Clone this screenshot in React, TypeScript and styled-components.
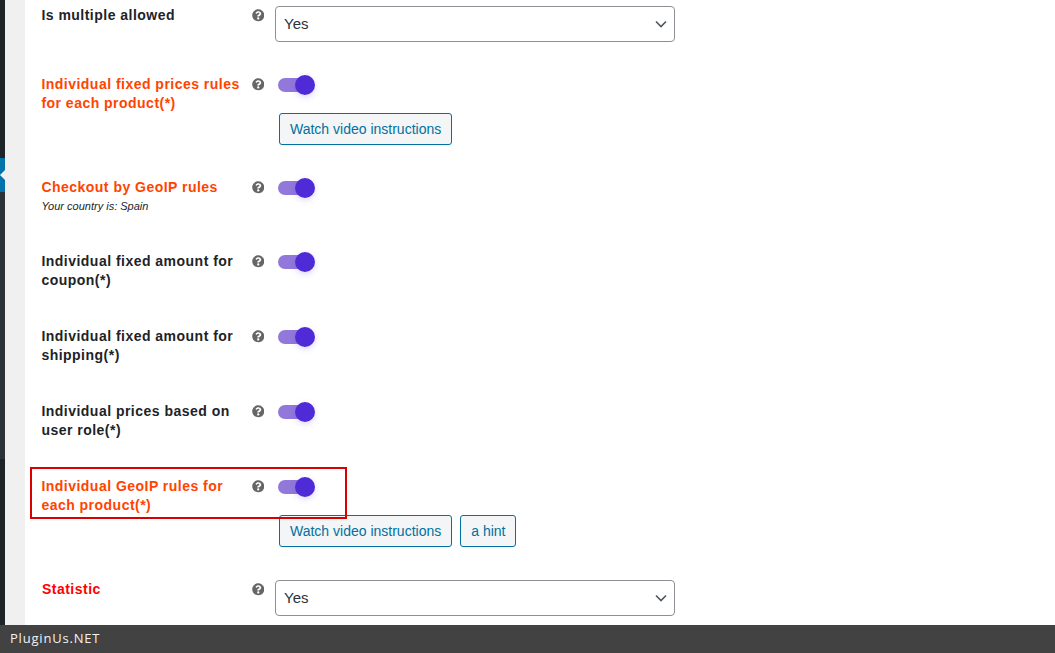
import React from "react";
import styled, { createGlobalStyle } from "styled-components";
import { FaQuestionCircle } from "react-icons/fa";

const Global = createGlobalStyle`
  html, body { margin: 0; padding: 0; background: #fff; }
  * { box-sizing: border-box; }
`;

const Shell = styled.div`
  width: 1055px;
  height: 653px;
  display: flex;
  flex-direction: column;
  overflow: hidden;
  font-family: "Liberation Sans", Arial, sans-serif;
`;
const Main = styled.div`
  flex: 1;
  min-height: 0;
  display: flex;
  overflow: hidden;
`;
const Sidebar = styled.div`
  width: 5px;
  flex: none;
  display: flex;
  flex-direction: column;
  background: #1d2327;
`;
const SideGap = styled.div`
  height: 158px;
`;
const SideActive = styled.div`
  height: 34px;
  background: #0073aa;
`;
const SideSub = styled.div`
  height: 267px;
  background: #2c3338;
`;
const Gutter = styled.div`
  width: 20px;
  flex: none;
  background: #f0f0f1;
  position: relative;
`;
const Notch = styled.div`
  position: absolute;
  left: -5px;
  top: 167px;
  width: 0;
  height: 0;
  border-top: 8px solid transparent;
  border-bottom: 8px solid transparent;
  border-right: 8px solid #f0f0f1;
`;
const Content = styled.div`
  flex: 1;
  background: #fff;
  padding: 6px 0 0 16px;
  display: flex;
  flex-direction: column;
`;
const Row = styled.div<{ $gap: number }>`
  position: relative;
  display: grid;
  grid-template-columns: 211px 25px 1fr;
  margin-bottom: ${(p) => p.$gap}px;
`;
const Label = styled.div<{ $tone?: "orange" | "red" }>`
  font-size: 14px;
  font-weight: 700;
  line-height: 19px;
  letter-spacing: 0.48px;
  padding-left: ${(p) => (p.$tone === "red" ? 1 : 0.4)}px;
  color: ${(p) => (p.$tone === "orange" ? "#ff4400" : p.$tone === "red" ? "#ff0000" : "#1d2327")};
`;
const Hint = styled.div`
  font-size: 11px;
  font-style: italic;
  line-height: 19px;
  padding-left: 0.4px;
  color: #1d2327;
`;
const HelpIcon = styled(FaQuestionCircle)`
  display: block;
  width: 12.5px;
  height: 12.5px;
  margin: 3px 0 0 -0.25px;
  color: #666;
`;
const Controls = styled.div`
  display: flex;
  flex-direction: column;
`;
const SelectBox = styled.div`
  width: 400px;
  height: 36px;
  margin-left: -2px;
  padding: 0 7px 2px 8px;
  display: flex;
  align-items: center;
  justify-content: space-between;
  border: 1px solid #8c8f94;
  border-radius: 4px;
  background: #fff;
  font-size: 15px;
  color: #2c3338;
`;
const Track = styled.div`
  position: relative;
  width: 34px;
  height: 14px;
  margin: 3px 0 0 1px;
  border-radius: 7px;
  background: #9278da;
`;
const Thumb = styled.div`
  position: absolute;
  top: -3px;
  left: 17px;
  width: 20px;
  height: 20px;
  border-radius: 50%;
  background: #4f2bd8;
  box-shadow: 0 2px 6px rgba(79, 43, 216, 0.2);
`;
const Buttons = styled.div`
  display: flex;
  gap: 8px;
  margin: 21px 0 0 2px;
`;
const Button = styled.div`
  height: 32px;
  padding: 0 10px;
  display: flex;
  align-items: center;
  border: 1px solid #0071a1;
  border-radius: 3px;
  background: #f3f5f6;
  color: #0071a1;
  font-size: 14px;
`;
const Highlight = styled.div`
  position: absolute;
  left: -11px;
  top: -10px;
  width: 317px;
  height: 52px;
  border: 2px solid #d90000;
  pointer-events: none;
`;
const Footer = styled.div`
  height: 28px;
  flex: none;
  padding: 0 0 2px 10px;
  display: flex;
  align-items: center;
  background: #424242;
  color: #f2f2f2;
  font-family: "Open Sans", sans-serif;
  font-size: 13px;
  letter-spacing: 0.8px;
`;
const ChevronIcon = styled.svg`
  margin-top: 2px;
`;

const Chevron = () => (
  <ChevronIcon width="12" height="8" viewBox="0 0 12 8" fill="none">
    <path d="M1 1.5 L6 6.5 L11 1.5" stroke="#50575e" strokeWidth="1.6" />
  </ChevronIcon>
);
const Help = () => <HelpIcon />;
const Select = () => (
  <SelectBox>
    Yes
    <Chevron />
  </SelectBox>
);
const Toggle = () => (
  <Track>
    <Thumb />
  </Track>
);

export default function App() {
  return (
    <Shell>
      <Global />
      <Main>
        <Sidebar>
          <SideGap />
          <SideActive />
          <SideSub />
        </Sidebar>
        <Gutter>
          <Notch />
        </Gutter>
        <Content>
          <Row $gap={33}>
            <Label>Is multiple allowed</Label>
            <Help />
            <Select />
          </Row>
          <Row $gap={33}>
            <Label $tone="orange">Individual fixed prices rules for each product(*)</Label>
            <Help />
            <Controls>
              <Toggle />
              <Buttons>
                <Button>Watch video instructions</Button>
              </Buttons>
            </Controls>
          </Row>
          <Row $gap={36}>
            <div>
              <Label $tone="orange">Checkout by GeoIP rules</Label>
              <Hint>Your country is: Spain</Hint>
            </div>
            <Help />
            <Toggle />
          </Row>
          <Row $gap={37}>
            <Label>Individual fixed amount for coupon(*)</Label>
            <Help />
            <Toggle />
          </Row>
          <Row $gap={37}>
            <Label>Individual fixed amount for shipping(*)</Label>
            <Help />
            <Toggle />
          </Row>
          <Row $gap={37}>
            <Label>Individual prices based on user role(*)</Label>
            <Help />
            <Toggle />
          </Row>
          <Row $gap={33}>
            <Highlight />
            <Label $tone="orange">Individual GeoIP rules for each product(*)</Label>
            <Help />
            <Controls>
              <Toggle />
              <Buttons>
                <Button>Watch video instructions</Button>
                <Button>a hint</Button>
              </Buttons>
            </Controls>
          </Row>
          <Row $gap={0}>
            <Label $tone="red">Statistic</Label>
            <Help />
            <Select />
          </Row>
        </Content>
      </Main>
      <Footer>PluginUs.NET</Footer>
    </Shell>
  );
}
